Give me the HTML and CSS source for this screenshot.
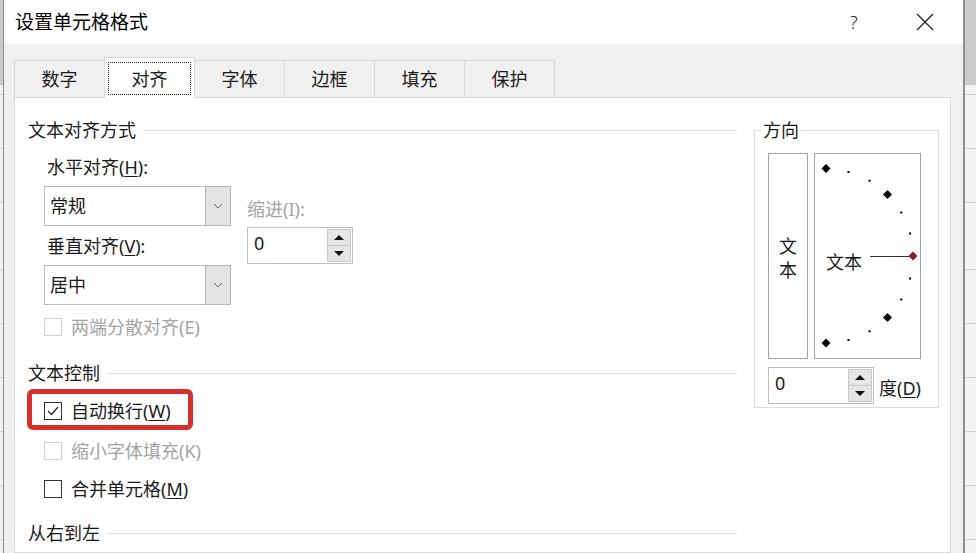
FILE: index.html
```html
<!DOCTYPE html>
<html>
<head lang="zh">
    <meta charset="UTF-8">
    <title>设置单元格格式</title>
    <link rel="stylesheet" href="styles.css">
</head>
<body>
<div class="sheet sheet_left"></div>
<div class="dialog">
    <div class="titlebar">
        <span class="title">设置单元格格式</span>
        <span class="help">?</span>
        <span class="close">
            <svg width="18" height="18" viewBox="0 0 18 18"><path d="M1 1L17 17M17 1L1 17" stroke="#222" stroke-width="1.3" fill="none"/></svg>
        </span>
    </div>

    <ul class="tabs">
        <li>数字</li>
        <li class="active"><span>对齐</span></li>
        <li>字体</li>
        <li>边框</li>
        <li>填充</li>
        <li>保护</li>
    </ul>

    <div class="panel">
        <div class="main">
            <div class="group_title">文本对齐方式</div>
            <div class="align">
                <div class="align_left">
                    <div class="label">水平对齐(<u>H</u>):</div>
                    <div class="select"><span>常规</span><i class="drop"><svg width="10" height="6" viewBox="0 0 10 6"><path d="M1 1L5 5L9 1" stroke="#666" fill="none"/></svg></i></div>
                    <div class="label">垂直对齐(<u>V</u>):</div>
                    <div class="select"><span>居中</span><i class="drop"><svg width="10" height="6" viewBox="0 0 10 6"><path d="M1 1L5 5L9 1" stroke="#666" fill="none"/></svg></i></div>
                </div>
                <div class="indent">
                    <div class="label disabled">缩进(I):</div>
                    <div class="spin">
                        <span>0</span>
                        <div class="spin_btn"><b class="up"></b><b class="down"></b></div>
                    </div>
                </div>
            </div>
            <div class="check disabled first"><i class="box"></i>两端分散对齐(E)</div>

            <div class="group_title">文本控制</div>
            <div class="check marked">
                <i class="box"><svg width="16" height="16" viewBox="0 0 16 16"><path d="M3 8L6.5 11.5L13 4" stroke="#222" stroke-width="1.2" fill="none"/></svg></i>自动换行(<u>W</u>)
            </div>
            <div class="check disabled"><i class="box"></i>缩小字体填充(K)</div>
            <div class="check last"><i class="box"></i>合并单元格(<u>M</u>)</div>

            <div class="group_title">从右到左</div>
        </div>

        <fieldset class="direction">
            <legend>方向</legend>
            <div class="orient">
                <div class="vertical_text"><span>文</span><span>本</span></div>
                <div class="arc">
                    <svg width="105" height="204" viewBox="0 0 105 204">
                        <g fill="#000">
                            <path d="M11 10L15.5 14.5L11 19L6.5 14.5Z"/>
                            <path d="M72.5 36L77 40.5L72.5 45L68 40.5Z"/>
                            <path d="M72.5 159L77 163.5L72.5 168L68 163.5Z"/>
                            <path d="M11 184.5L15.5 189L11 193.5L6.5 189Z"/>
                            <rect x="32.5" y="17" width="2" height="2"/>
                            <rect x="53.5" y="25.7" width="2" height="2"/>
                            <rect x="85.3" y="57.5" width="2" height="2"/>
                            <rect x="94" y="78.5" width="2" height="2"/>
                            <rect x="94" y="123.5" width="2" height="2"/>
                            <rect x="85.3" y="144.5" width="2" height="2"/>
                            <rect x="53.5" y="176.3" width="2" height="2"/>
                            <rect x="32.5" y="185" width="2" height="2"/>
                        </g>
                        <line x1="55" y1="102.5" x2="95" y2="102.5" stroke="#333" stroke-width="1"/>
                        <path d="M98 97.5L102.5 102L98 106.5L93.5 102Z" fill="#8b1e22"/>
                        <text x="11" y="115" class="arc_text">文本</text>
                    </svg>
                </div>
            </div>
            <div class="degree">
                <div class="spin">
                    <span>0</span>
                    <div class="spin_btn"><b class="up"></b><b class="down"></b></div>
                </div>
                <span class="degree_label">度(<u>D</u>)</span>
            </div>
        </fieldset>
    </div>
</div>
<div class="sheet sheet_right"></div>
</body>
</html>
```

FILE: styles.css
```css
*{margin: 0; padding: 0; box-sizing: border-box}
ul{list-style: none}

body{
    width: 976px;
    height: 553px;
    overflow: hidden;
    display: flex;
    background: #f2f2f2;
    font-family: "Noto Sans", "Noto Sans CJK SC", sans-serif;
    font-size: 18px;
    line-height: 24px;
    color: #1a1a1a;
}
u{text-decoration: underline; text-underline-offset: 2px}

/* 背后的表格 */
.sheet{
    background:
        linear-gradient(#cbcbcb 0, #cbcbcb 85px, transparent 85px),
        repeating-linear-gradient(#f3f3f3 0, #f3f3f3 53px, #cfcfcf 53px, #cfcfcf 54px);
    background-position: 0 0, 0 216px;
}
.sheet_left{
    width: 4px;
    border-right: 1px solid #8a8a8a;
}
.sheet_right{
    flex: 1;
    border-left: 2px solid #8f8f8f;
}

.dialog{
    width: 959px;
    background: #f0f0f0;
    display: flex;
    flex-direction: column;
}

.titlebar{
    height: 44px;
    flex-shrink: 0;
    background: #ffffff;
    display: flex;
    align-items: center;
    padding-left: 11px;
}
.title{
    font-size: 19px;
    color: #000;
    flex: 1;
}
.help{
    font-size: 18px;
    color: #222;
    width: 20px;
    margin-right: 46px;
    font-weight: 300;
}
.close{
    display: flex;
    margin-right: 29px;
}

/* 选项卡 */
.tabs{
    display: flex;
    align-items: flex-end;
    height: 40px;
    margin-top: 13px;
    padding-left: 10px;
    flex-shrink: 0;
}
.tabs li{
    width: 91px;
    height: 37px;
    border: 1px solid #d9d9d9;
    border-bottom: none;
    margin-right: -1px;
    display: flex;
    align-items: center;
    justify-content: center;
    background: #f0f0f0;
}
.tabs li.active{
    height: 41px;
    margin-bottom: -1px;
    background: #ffffff;
    position: relative;
    z-index: 1;
    padding: 4px 3px 3px;
}
.tabs li.active span{
    width: 100%;
    height: 100%;
    border: 1px dotted #222;
    display: flex;
    align-items: center;
    justify-content: center;
}

.panel{
    flex: 1;
    margin-left: 10px;
    width: 937px;
    background: #ffffff;
    border: 1px solid #d9d9d9;
    display: flex;
    align-items: flex-start;
    padding: 20px 0 0 13px;
}

.main{
    width: 709px;
}
.group_title{
    display: flex;
    align-items: center;
}
.group_title::after{
    content: "";
    flex: 1;
    border-top: 1px solid #dcdcdc;
    margin-left: 7px;
    margin-top: 1px;
}

.align{
    display: flex;
    padding-left: 16px;
    margin-top: 13px;
}
.align_left{
    width: 187px;
}
.label{
    padding-left: 3px;
}
.select{
    height: 40px;
    border: 1px solid #bdbdbd;
    display: flex;
    align-items: center;
    margin: 7px 0 8px;
}
.select:last-child{
    margin-bottom: 0;
}
.select span{
    flex: 1;
    padding-left: 5px;
}
.drop{
    width: 26px;
    height: 40px;
    margin: -1px -1px -1px 0;
    background: #e3e3e3;
    border: 1px solid #b5b5b5;
    display: flex;
    align-items: center;
    justify-content: center;
}

.indent{
    margin-left: 16px;
    padding-top: 42px;
}
.indent .label{
    padding-left: 0;
    margin-bottom: 6px;
}
.disabled{
    color: #a3a3a3;
}

.spin{
    width: 106px;
    height: 37px;
    border: 1px solid #c0c0c0;
    display: flex;
    padding-left: 6px;
}
.spin span{
    flex: 1;
    padding-top: 3px;
}
.spin_btn{
    width: 25px;
    display: flex;
    flex-direction: column;
    padding: 1px 1px 1px 0;
}
.spin_btn b{
    flex: 1;
    background: #e5e5e5;
    border: 1px solid #c9c9c9;
    display: flex;
    align-items: center;
    justify-content: center;
}
.spin_btn b + b{
    border-top: none;
}
.spin_btn b::before{
    content: "";
    border-left: 5px solid transparent;
    border-right: 5px solid transparent;
}
.spin_btn .up::before{
    border-bottom: 5px solid #111;
}
.spin_btn .down::before{
    border-top: 5px solid #111;
}

.check{
    display: flex;
    align-items: center;
    padding-left: 16px;
    margin-top: 14px;
    margin-bottom: 16px;
    position: relative;
}
.check.first{
    margin-top: 10px;
    margin-bottom: 22px;
}
.check .box{
    width: 18px;
    height: 18px;
    border: 1px solid #333;
    margin-right: 9px;
    display: flex;
    align-items: center;
    justify-content: center;
}
.check.disabled .box{
    border-color: #d0d0d0;
}
/* 红色标注框 */
.check.marked::before{
    content: "";
    box-sizing: border-box;
    position: absolute;
    left: -1px;
    top: -10px;
    width: 166px;
    height: 41px;
    border: 5px solid #d5312b;
    border-radius: 6px;
}
.check.last{
    margin-top: -2px;
    margin-bottom: 20px;
}

/* 方向 */
.direction{
    margin-left: 17px;
    width: 185px;
    height: 290px;
    border: 1px solid #dcdcdc;
    padding: 0 16px 0 13px;
    min-width: 0;
}
.direction legend{
    padding: 0 2px;
    margin-left: -7px;
    line-height: 24px;
}
.orient{
    display: flex;
    margin-top: 11px;
}
.vertical_text{
    width: 40px;
    height: 206px;
    border: 1px solid #a3a3a3;
    display: flex;
    flex-direction: column;
    align-items: center;
    justify-content: center;
    padding-top: 3px;
}
.arc{
    width: 107px;
    height: 206px;
    margin-left: 6px;
    border: 1px solid #a3a3a3;
}
.arc svg{
    display: block;
}
.arc_text{
    font-family: "Noto Sans CJK SC", sans-serif;
    font-size: 18px;
    fill: #1a1a1a;
}
.degree{
    display: flex;
    align-items: center;
    margin-top: 8px;
}
.degree_label{
    margin-left: 5px;
    padding-top: 4px;
}
```
